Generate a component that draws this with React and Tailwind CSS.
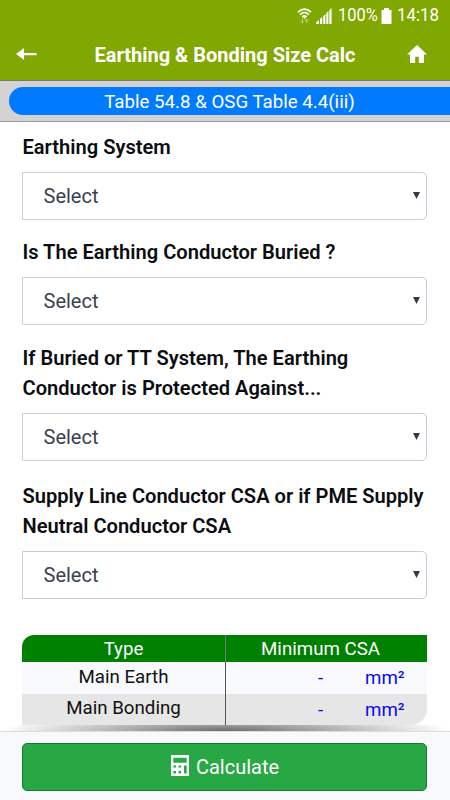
import { useState } from 'react'

const fields = [
  { id: 'system', lines: ['Earthing System'], className: 'h-[105px]' },
  { id: 'buried', lines: ['Is The Earthing Conductor Buried ?'], className: 'h-[106px]' },
  {
    id: 'protection',
    lines: ['If Buried or TT System, The Earthing', 'Conductor is Protected Against...'],
    className: 'h-[138px]'
  },
  {
    id: 'csa',
    lines: ['Supply Line Conductor CSA or if PME Supply', 'Neutral Conductor CSA'],
    className: 'h-[154px]'
  }
]

const rows = [
  { label: 'Main Earth', bg: 'bg-[#f8f9fc]', leading: 'leading-[30px]' },
  { label: 'Main Bonding', bg: 'bg-[#e6e6e6] rounded-br-2xl', leading: 'leading-[28px]' }
]

function StatusBar() {
  return (
    <div className="flex h-[31px] items-center justify-end pr-[11px] text-[18.7px] leading-none text-white">
      <svg className="mr-[4px] h-[16px] w-[15px]" viewBox="0 0 15 16" fill="none" stroke="white">
        <path d="M1 4.2Q7.5-1.8 14 4.2M3 6.6Q7.5 2.4 12 6.6M5.2 8.8Q7.5 6.8 9.8 8.8" strokeWidth="1.6" />
        <path d="M7.5 8.2L9 9.8L7.5 11L6 9.8Z" fill="white" stroke="none" />
        <path d="M5.3 11.2V15M3.7 13.4L5.3 15L6.9 13.4M9.8 15.2V11.2M8.2 12.8L9.8 11.2L11.4 12.8" stroke="#c3d68a" strokeWidth="1" />
      </svg>
      <svg className="mr-[6px] h-[16px] w-[16px]" viewBox="0 0 16 16" fill="white">
        <path d="M0 16V14.5L3 12V16ZM4 16V11L6.2 9V16ZM7.2 16V8.2L9.4 6V16ZM10.3 16V5.2L12.4 3V16ZM13.3 16V2.2L15.6 0V16Z" />
      </svg>
      <span className="w-[40px] origin-left scale-x-88">100%</span>
      <svg className="mr-[5px] ml-[3px] h-[16px] w-[11px]" viewBox="0 0 11 16" fill="white">
        <path d="M3 0H8V2H10.5V16H0.5V2H3Z" />
      </svg>
      <span className="w-[42px] origin-left scale-x-90">14:18</span>
    </div>
  )
}

function Header() {
  return (
    <header className="h-[80px] shrink-0 bg-[#80a800]">
      <StatusBar />
      <div className="flex h-[48px] items-center justify-between pr-[23px] pl-[16px] text-white">
        <button aria-label="Back" className="w-[21px] pb-[2px]">
          <svg className="h-[12px] w-[21px]" viewBox="0 0 21 12" fill="white">
            <path d="M0 6L8 0V4.9H20.5V7.2H8V12Z" />
          </svg>
        </button>
        <h1 className="ml-[6px] text-[20px] font-bold whitespace-nowrap">Earthing &amp; Bonding Size Calc</h1>
        <button aria-label="Home" className="pb-[2px]">
          <svg className="h-[18px] w-[20px]" viewBox="0 0 20 18" fill="white">
            <path d="M10 0L20 9.4H17V18H11.8V11.8H8.2V18H3V9.4H0Z" />
          </svg>
        </button>
      </div>
    </header>
  )
}

function SelectField({ field, value, onChange }) {
  return (
    <div className={field.className}>
      <label htmlFor={field.id} className="block pl-[0.5px] text-[20.1px] leading-[30px] font-semibold whitespace-nowrap text-[#0b0d10]">
        {field.lines.map((line) => (
          <span key={line} className="block">{line}</span>
        ))}
      </label>
      <div className="relative mt-[10px]">
        <select
          id={field.id}
          value={value}
          onChange={(e) => onChange(field.id, e.target.value)}
          className="block h-[48px] w-full appearance-none rounded-r-[5px] border border-[#c8ced6] bg-white pl-[20.5px] text-[20px] text-[#3b424f]"
        >
          <option value="">Select</option>
        </select>
        <svg className="pointer-events-none absolute top-[20px] right-[7px] h-[7px] w-[7px]" viewBox="0 0 7 7" fill="#343a46">
          <path d="M0 0H7L3.5 7Z" />
        </svg>
      </div>
    </div>
  )
}

function ResultTable() {
  return (
    <div className="h-[90px] text-[18.7px]">
      <div className="flex h-[27px] items-center overflow-hidden rounded-tl-xl bg-[#008000] text-center text-white">
        <div className="h-full w-[203px] leading-[28px]">Type</div>
        <div className="h-full flex-1 border-l border-[#777] pr-[12px] leading-[28px]">Minimum CSA</div>
      </div>
      {rows.map((row) => (
        <div key={row.label} className={`flex h-[31.5px] overflow-hidden ${row.bg}`}>
          <div className={`w-[203px] text-center text-[#111] ${row.leading}`}>{row.label}</div>
          <div className="flex flex-1 border-l border-[#555] leading-[32px] text-[#0a0af5]">
            <span className="w-[189px] text-center">-</span>
            <span className="-ml-[50px] w-[60px]">mm²</span>
          </div>
        </div>
      ))}
    </div>
  )
}

export default function App() {
  const [values, setValues] = useState({ system: '', buried: '', protection: '', csa: '' })

  const handleChange = (id, value) => {
    setValues({ ...values, [id]: value })
  }

  return (
    <div className="flex h-[800px] w-[450px] flex-col overflow-hidden bg-white font-['Roboto',sans-serif]">
      <Header />
      <div className="h-[42px] shrink-0 border-t border-b border-t-[#777] border-b-[#999] bg-[#d3d3d3] pt-[6px] pl-[9px]">
        <div className="h-[28px] rounded-l-full bg-[#007bff] text-center text-[18.7px] leading-[30px] text-white">
          Table 54.8 &amp; OSG Table 4.4(iii)
        </div>
      </div>
      <main className="h-[603px] shrink-0 pt-[10px] pr-[23px] pl-[22px]">
        {fields.map((field) => (
          <SelectField key={field.id} field={field} value={values[field.id]} onChange={handleChange} />
        ))}
        <ResultTable />
      </main>
      <div className="h-[6px] shrink-0 bg-[radial-gradient(ellipse_225px_18px_at_bottom,#6c6c6c,#ffffff)]" />
      <footer className="flex-1 border-t border-[#dcdde0] bg-[#f8f9fc] pt-[11px] pr-[23px] pl-[22px]">
        <button className="flex h-[48px] w-full items-center justify-center gap-[7px] rounded-[5px] border border-[#167a2c] bg-[#28a745] pl-[1px] text-[20px] text-white">
          <svg className="mb-[3px] h-[21px] w-[18px]" viewBox="0 0 18 21" fill="none">
            <path fill="white" fillRule="evenodd" d="M0 0H18V21H0ZM2.3 2.8V7.8H15.7V2.8ZM2.3 10.5V12.5H5V10.5ZM7.5 10.5V12.5H10V10.5ZM13 10.5V18.5H15.7V10.5ZM2.3 16V18.5H5V16ZM7.5 16V18.5H10V16Z" />
          </svg>
          Calculate
        </button>
      </footer>
    </div>
  )
}
